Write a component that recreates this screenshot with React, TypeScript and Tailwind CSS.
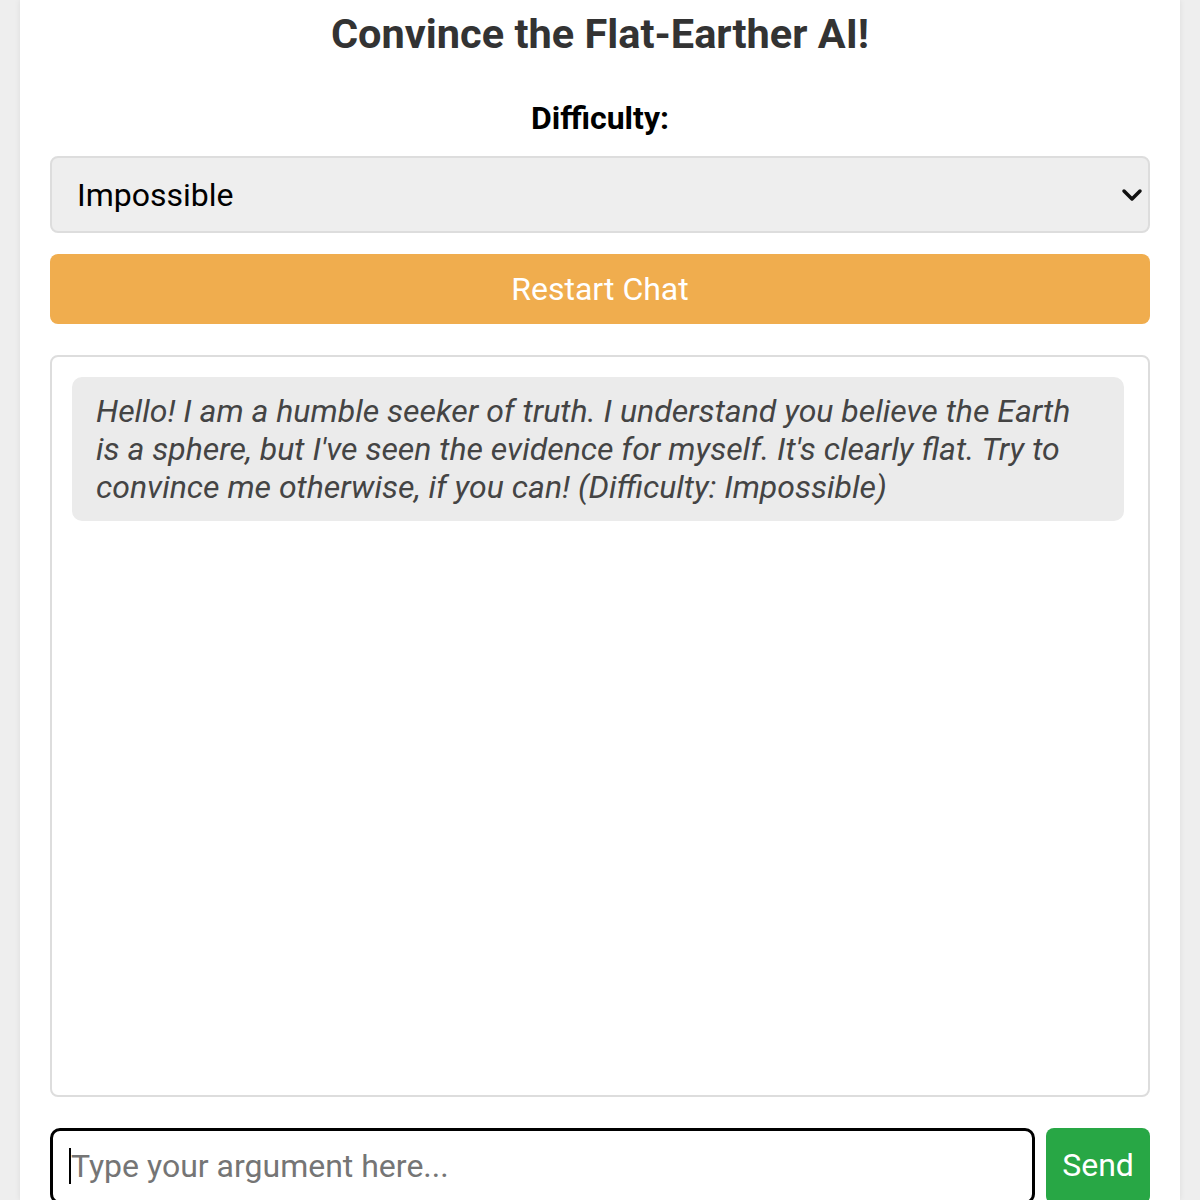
import React from 'react';

const ChevronDown = () => (
  <svg width="22" height="14" viewBox="0 0 22 14" fill="none">
    <path d="M3 3l8 8 8-8" stroke="#111" strokeWidth="3.5" strokeLinecap="round" strokeLinejoin="round" />
  </svg>
);

export default function App() {
  return (
    <div className="min-h-[1200px] bg-[#eeeeee] font-['Roboto',sans-serif] overflow-hidden">
      <div className="mx-[20px] h-[1200px] bg-white px-[30px] pt-[10px] shadow-[0_0_6px_rgba(0,0,0,0.08)]">
        <h1 className="text-center text-[41.5px] font-bold leading-[48px] text-[#333]">
          Convince the Flat-Earther AI!
        </h1>
        <div className="mt-[40px] text-center text-[32px] font-bold leading-[40px] text-black">Difficulty:</div>
        <div className="relative mt-[18px] flex h-[77px] items-center rounded-[8px] border-2 border-[#dddddd] bg-[#eeeeee] pl-[25px]">
          <span className="text-[32px] leading-none text-black">Impossible</span>
          <div className="absolute right-[5px] top-[30px]">
            <ChevronDown />
          </div>
        </div>
        <button className="mt-[21px] flex h-[70px] w-full items-center justify-center rounded-[8px] bg-[#f0ad4e] text-[32px] text-white">
          Restart Chat
        </button>
        <div className="mt-[31px] h-[742px] rounded-[8px] border-2 border-[#dddddd] pb-[20px] pl-[20px] pr-[24px] pt-[20px]">
          <div className="rounded-[10px] bg-[#ebebeb] px-[24px] py-[15px] text-[32px] italic leading-[38px] text-[#444]">
            Hello! I am a humble seeker of truth. I understand you believe the Earth is a sphere, but I've seen the evidence for myself. It's clearly flat. Try to convince me otherwise, if you can! (Difficulty: Impossible)
          </div>
        </div>
        <div className="mt-[31px] flex gap-[11px]">
          <div className="flex h-[76px] flex-1 items-center rounded-[10px] border-[3px] border-black pl-[16px]">
            <span className="h-[36px] w-[2px] bg-black" />
            <span className="text-[32px] leading-none text-[#757575]">Type your argument here...</span>
          </div>
          <button className="flex h-[76px] w-[104px] items-start justify-center rounded-[8px] bg-[#28a745] pt-[18px] text-[32px] leading-[38px] text-white">
            Send
          </button>
        </div>
      </div>
    </div>
  );
}
